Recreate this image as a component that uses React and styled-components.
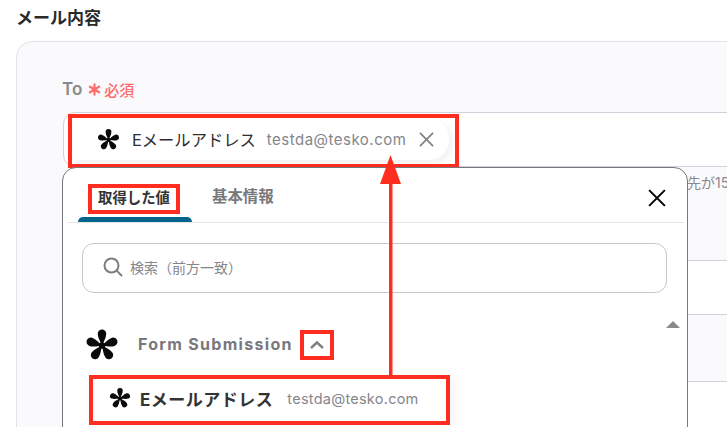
import React from "react";
import styled, { createGlobalStyle } from "styled-components";

const Global = createGlobalStyle`
  html, body {
    margin: 0;
    padding: 0;
    height: 427px;
    overflow: hidden;
    background: #fff;
    font-family: "Inter", "Noto Sans CJK JP", sans-serif;
  }
`;

const RED = "#ff2d20";

const Page = styled.div`
  position: relative;
  width: 727px;
  height: 427px;
  overflow: hidden;
  box-sizing: border-box;
  padding: 8px 0 0 16px;
`;

const Title = styled.h2`
  margin: 0 0 12px;
  font-size: 17px;
  line-height: 21px;
  font-weight: 600;
  color: #2a2a2a;
`;

const Card = styled.section`
  width: 760px;
  height: 420px;
  box-sizing: border-box;
  padding: 35px 0 0 46px;
  background: #faf9fc;
  border: 1px solid #e3e3e6;
  border-radius: 16px;
`;

const Label = styled.div`
  display: flex;
  align-items: center;
  gap: 5px;
  height: 24px;
  margin: 0 0 11px -1px;
  font-size: 17px;
  font-weight: 600;
  color: #8a8a8a;
`;

const Required = styled.span`
  display: flex;
  align-items: center;
  gap: 2px;
  font-size: 15px;
  font-weight: 500;
  color: #ff6b6b;
`;

const ToInput = styled.div`
  display: flex;
  align-items: flex-start;
  height: 55px;
  box-sizing: border-box;
  padding: 1px 4px;
  background: #fff;
  border: 1px solid #d2d2dc;
  border-radius: 12px 0 0 12px;
`;

const ChipBox = styled.div`
  display: flex;
  align-items: flex-start;
  width: 391px;
  height: 54px;
  box-sizing: border-box;
  border: 4px solid ${RED};
  background: #fff;
  overflow: hidden;
`;

const ChipPill = styled.div`
  display: flex;
  align-items: center;
  width: 377px;
  height: 42px;
  box-sizing: border-box;
  padding-left: 25px;
  border-radius: 0 20px 20px 0;
  background: #fff;
  box-shadow: 3px 3px 6px rgba(40, 30, 70, 0.07);
`;

const ChipName = styled.span`
  margin-left: 12px;
  font-size: 16.3px;
  font-weight: 400;
  color: #2e2e2e;
  white-space: nowrap;
`;

const ChipValue = styled.span`
  margin-left: 11px;
  font-size: 15px;
  letter-spacing: 0.5px;
  color: #85858c;
  white-space: nowrap;
`;

const ChipClose = styled.span`
  display: flex;
  margin-left: 13px;
`;

const Hint = styled.div`
  height: 93px;
  box-sizing: border-box;
  padding: 6px 0 0 610px;
  font-size: 14px;
  line-height: 20px;
  color: #8a8a90;
  white-space: nowrap;
`;

const Field = styled.div`
  height: ${(p) => p.$height}px;
  box-sizing: border-box;
  background: ${(p) => (p.$filled ? "#faf9fc" : "#fff")};
  border-top: 1px solid #d2d2dc;
`;

const Modal = styled.div`
  position: absolute;
  left: 62px;
  top: 167px;
  width: 626px;
  height: 300px;
  box-sizing: border-box;
  background: #fff;
  border: 1px solid #77777c;
  border-radius: 14px;
`;

const TabBar = styled.div`
  position: relative;
  display: flex;
  align-items: flex-start;
  height: 55px;
  box-sizing: border-box;
  margin: 0 2px 0 4px;
  padding: 16px 0 0 21px;
  border-bottom: 1px solid #e4e6e8;
`;

const ActiveTab = styled.div`
  display: flex;
  flex-direction: column;
  align-items: flex-start;
  width: 114px;
  height: 38px;
  margin-left: -10px;
  justify-content: space-between;
`;

const TabMark = styled.span`
  display: block;
  width: 114px;
  height: 5px;
  background: #05648a;
  border-radius: 5px 5px 0 0;
`;

const TabLabel = styled.span`
  box-sizing: border-box;
  height: 30px;
  width: 92px;
  margin-left: 10px;
  text-align: center;
  border: 4px solid ${RED};
  font-size: 14.4px;
  line-height: 19px;
  font-weight: 700;
  color: #333;
  white-space: nowrap;
`;

const Tab = styled.span`
  margin: 2px 0 0 20px;
  font-size: 15.4px;
  line-height: 22px;
  font-weight: 600;
  color: #77777c;
`;

const CloseButton = styled.span`
  position: absolute;
  right: 19px;
  top: 21px;
  display: flex;
`;

const Body = styled.div`
  display: flex;
  flex-direction: column;
  padding: 20px 20px 0 19px;
`;

const Search = styled.div`
  display: flex;
  align-items: center;
  gap: 7px;
  height: 50px;
  box-sizing: border-box;
  padding: 0 0 2px 20px;
  border: 1px solid #c8c8ca;
  border-radius: 12px;
  font-size: 14px;
  color: #85858a;
`;

const SectionRow = styled.div`
  display: flex;
  align-items: center;
  height: 32px;
  margin: 36px 0 0 3px;
`;

const SectionName = styled.span`
  margin: -2px 0 0 19px;
  font-size: 16px;
  font-weight: 700;
  letter-spacing: 1.3px;
  color: #77777e;
  white-space: nowrap;
`;

const ChevronBox = styled.span`
  display: flex;
  align-items: center;
  justify-content: center;
  width: 34px;
  height: 30px;
  box-sizing: border-box;
  margin-left: 7px;
  border: 4px solid ${RED};
`;

const ResultRow = styled.div`
  display: flex;
  align-items: center;
  width: 361px;
  height: 50px;
  box-sizing: border-box;
  margin: 14px 0 0 7px;
  padding: 0 0 4px 16px;
  border: 4px solid ${RED};
  background: #fff;
  box-shadow: 6px 2px 12px rgba(40, 30, 70, 0.04);
`;

const ResultName = styled.span`
  margin-left: 9px;
  font-size: 17px;
  letter-spacing: 0.5px;
  font-weight: 700;
  color: #333;
  white-space: nowrap;
`;

const ResultValue = styled.span`
  margin-left: 14px;
  font-size: 14.5px;
  letter-spacing: 0.25px;
  color: #85858c;
  white-space: nowrap;
`;

const ScrollArrow = styled.span`
  position: absolute;
  right: 7px;
  top: 153px;
  width: 0;
  height: 0;
  border-left: 7px solid transparent;
  border-right: 7px solid transparent;
  border-bottom: 7px solid #8a8a8e;
`;

const Arrow = styled.svg`
  position: absolute;
  left: 379px;
  top: 154px;
`;

const Logo = ({ size }) => (
  <svg width={size} height={size} viewBox="0 0 32 32" fill="#0a0a0a">
    <circle cx="16" cy="16.5" r="3" />
    {[0, 72, 144, 216, 288].map((a) => (
      <path
        key={a}
        d="M16 17C14.800 13 12 9.500 12 5.400A4 4 0 0 1 20 5.400C20 9.500 17.200 13 16 17Z"
        transform={`rotate(${a} 16 16.5)`}
      />
    ))}
  </svg>
);

const Cross = ({ size, color, width }) => (
  <svg width={size} height={size} viewBox="0 0 16 16" fill="none" stroke={color} strokeWidth={width}>
    <path d="M1 1 15 15M15 1 1 15" />
  </svg>
);

export default function App() {
  return (
    <>
      <Global />
      <Page>
        <Title>メール内容</Title>
        <Card>
          <Label>
            To
            <Required>
              <svg width="15" height="15" viewBox="0 0 14 14" stroke="#ff6b6b" strokeWidth="2" fill="none">
                <path d="M7 1.500V12.500M2 4 12 10M12 4 2 10" />
              </svg>
              必須
            </Required>
          </Label>
          <ToInput>
            <ChipBox>
              <ChipPill>
                <Logo size={23} />
                <ChipName>Eメールアドレス</ChipName>
                <ChipValue>testda@tesko.com</ChipValue>
                <ChipClose>
                  <Cross size={15} color="#808080" width={1.8} />
                </ChipClose>
              </ChipPill>
            </ChipBox>
          </ToInput>
          <Hint>宛先が15</Hint>
          <Field $height={54} />
          <Field $height={67} $filled />
          <Field $height={60} />
        </Card>

        <Modal>
          <TabBar>
            <ActiveTab>
              <TabLabel>取得した値</TabLabel>
              <TabMark />
            </ActiveTab>
            <Tab>基本情報</Tab>
            <CloseButton>
              <Cross size={18} color="#000" width={1.8} />
            </CloseButton>
          </TabBar>
          <Body>
            <Search>
              <svg width="20" height="20" viewBox="0 0 20 20" fill="none" stroke="#7d7d7d" strokeWidth="2">
                <circle cx="8.500" cy="8.500" r="7" />
                <path d="M13.600 13.600 19 19" />
              </svg>
              検索（前方一致）
            </Search>
            <SectionRow>
              <Logo size={34} />
              <SectionName>Form Submission</SectionName>
              <ChevronBox>
                <svg width="16" height="10" viewBox="0 0 16 10" fill="none" stroke="#808084" strokeWidth="2.4">
                  <path d="M2 8 8 2.500 14 8" />
                </svg>
              </ChevronBox>
            </SectionRow>
            <ResultRow>
              <Logo size={22} />
              <ResultName>Eメールアドレス</ResultName>
              <ResultValue>testda@tesko.com</ResultValue>
            </ResultRow>
          </Body>
          <ScrollArrow />
        </Modal>

        <Arrow width="24" height="222" viewBox="0 0 24 222">
          <path d="M11.500 1 22 30H13.500V221H10V30H1Z" fill={RED} />
        </Arrow>
      </Page>
    </>
  );
}
